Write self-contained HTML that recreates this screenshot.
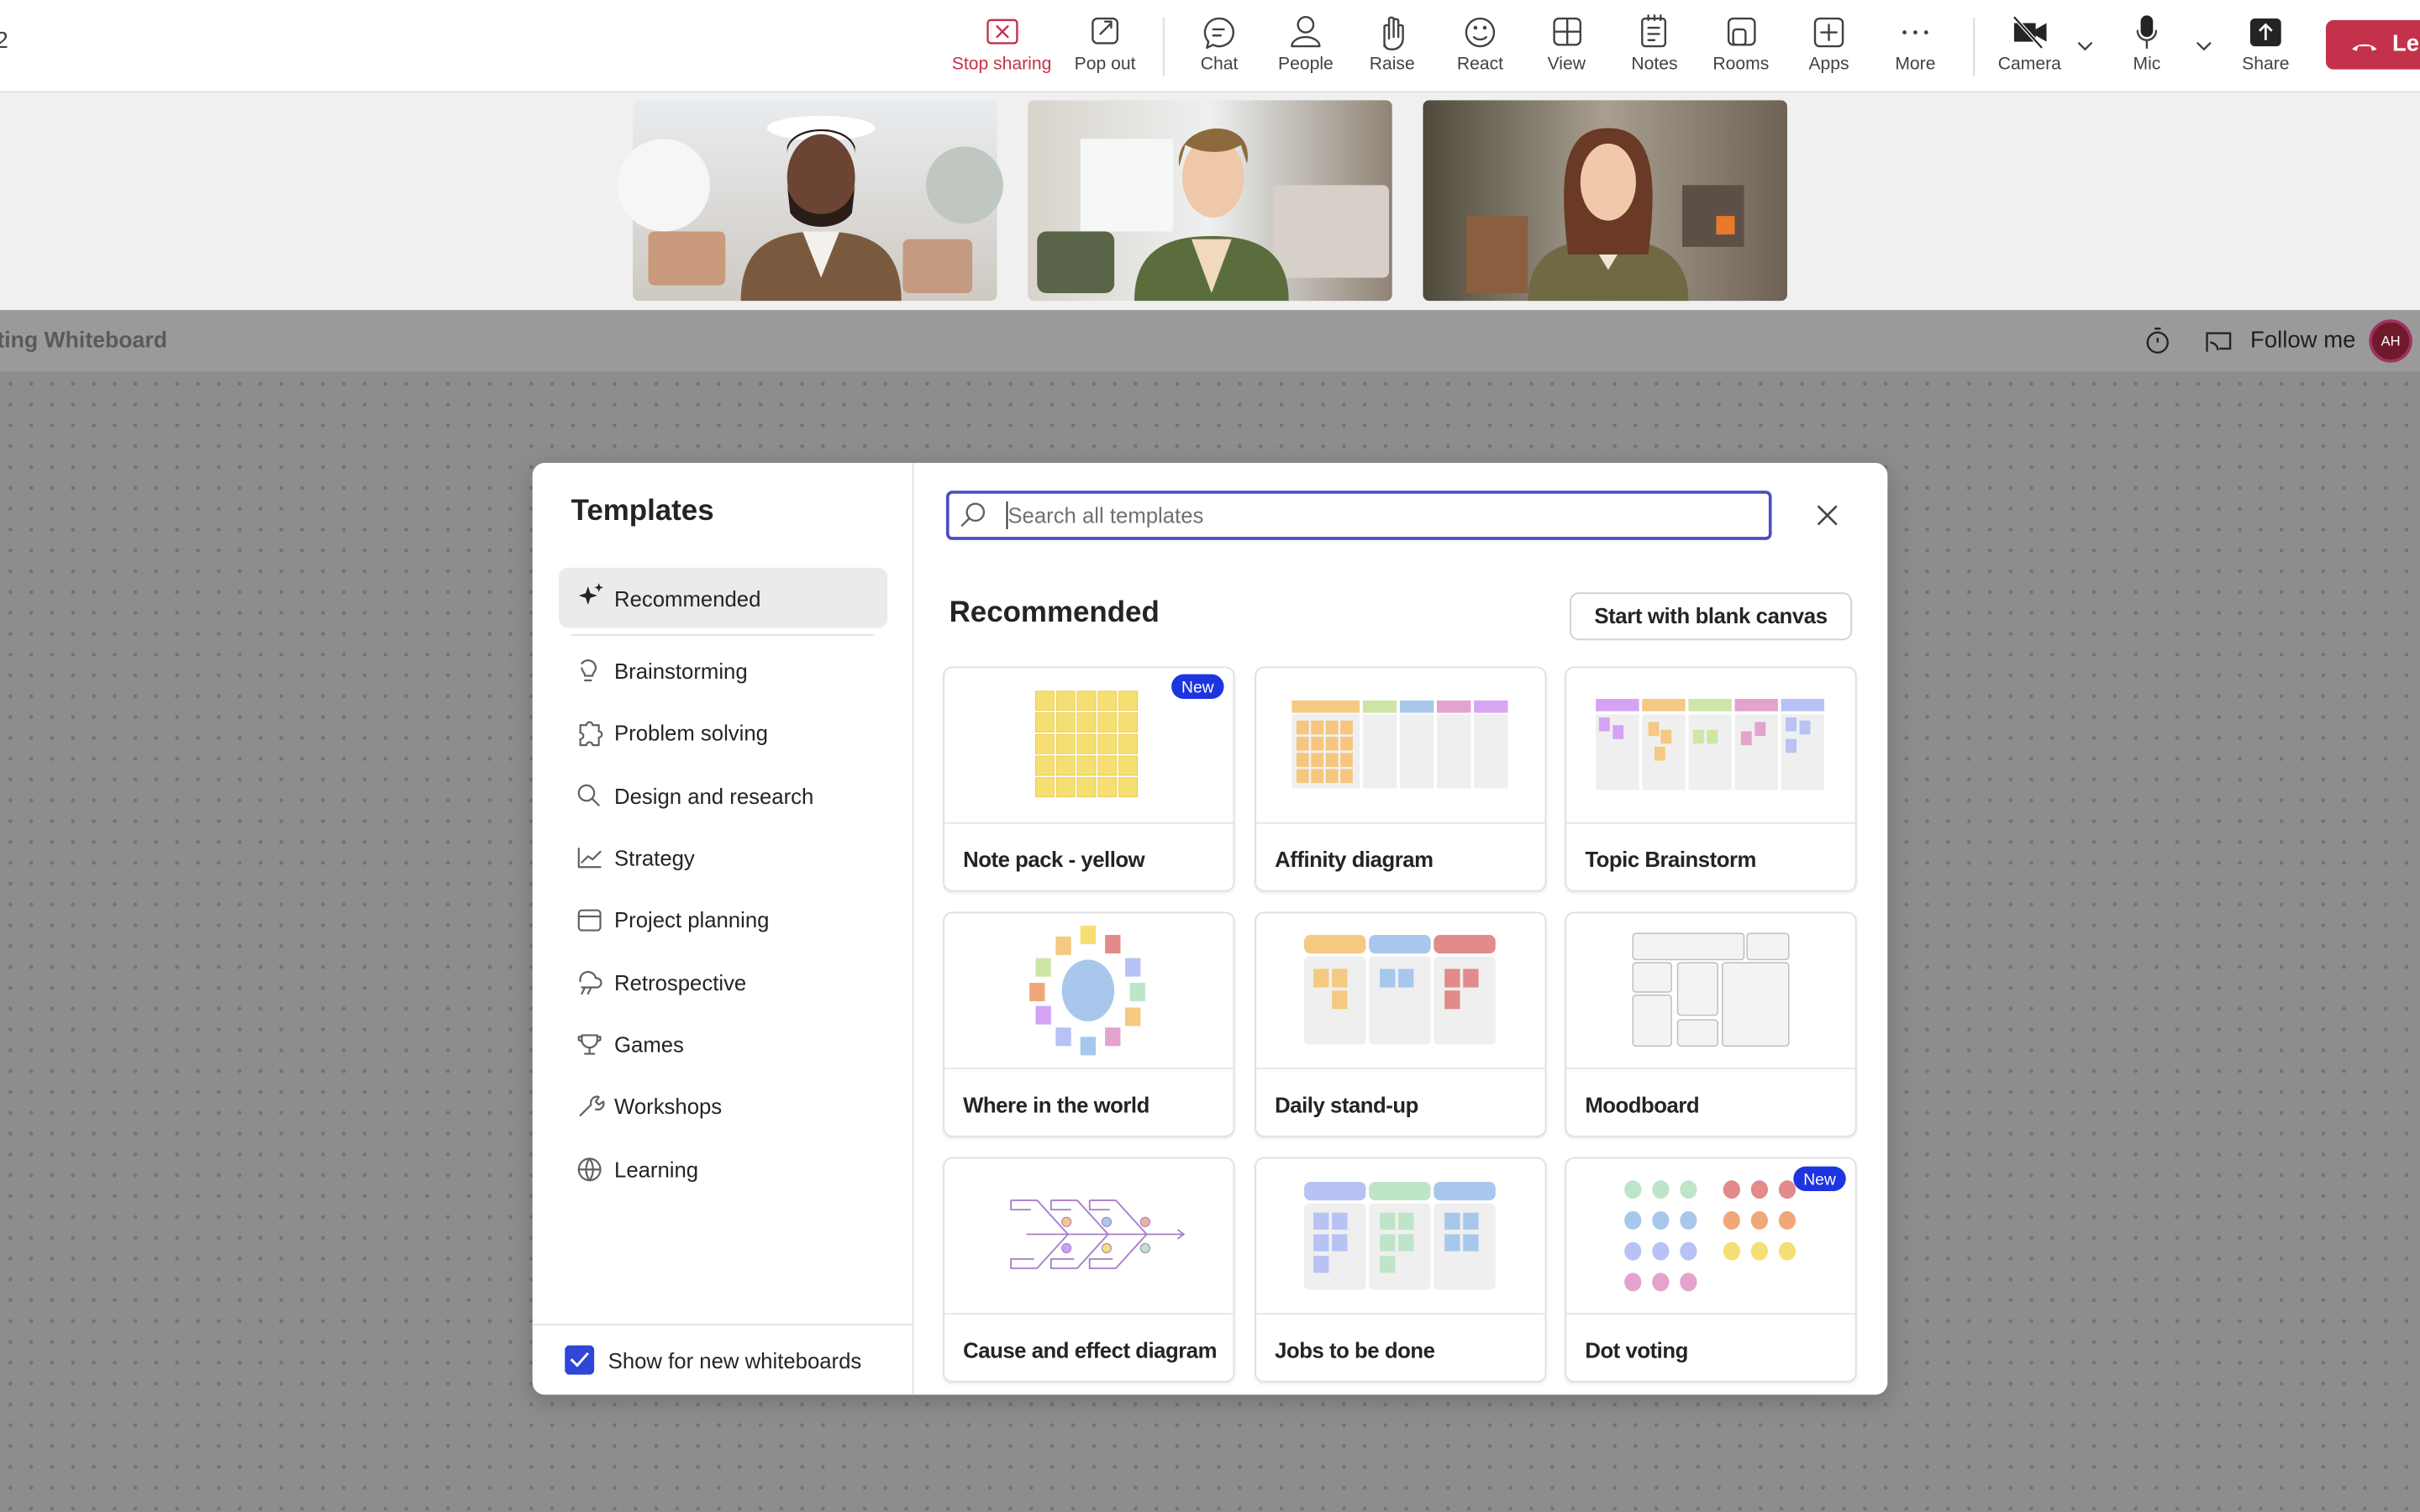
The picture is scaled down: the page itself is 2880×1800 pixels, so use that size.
<!DOCTYPE html>
<html><head><meta charset="utf-8">
<style>
*{margin:0;padding:0;box-sizing:border-box}
html,body{width:2880px;height:1800px;overflow:hidden;background:#8c8c8c}
#s{position:absolute;left:0;top:0;width:1568px;height:980px;transform:scale(1.836735);transform-origin:0 0;font-family:"Liberation Sans",sans-serif;color:#242424}
.abs{position:absolute}
.top{left:0;top:0;width:1568px;height:60px;background:#fff;border-bottom:1px solid #e0e0e0}
.lbl{position:absolute;top:36px;font-size:11.5px;color:#424242;transform:translateX(-50%);white-space:nowrap}
.strip{left:0;top:60px;width:1568px;height:141px;background:#f0f0f0}
.hdr{left:0;top:201px;width:1568px;height:41px;background:#9a9a9a;border-bottom:1px solid #8a8a8a}
.canvas{left:0;top:242px;width:1568px;height:738px;background-color:#8d8d8d;background-image:radial-gradient(#737373 1.1px,transparent 1.4px);background-size:13.5px 13.5px}
.modal{left:345px;top:300px;width:878px;height:604px;background:#fff;border-radius:8px;box-shadow:0 4px 16px rgba(0,0,0,.2);overflow:hidden}
.side{left:0;top:0;width:247px;height:604px;border-right:1px solid #e1e1e1}
.item{position:absolute;left:53px;font-size:14px;color:#242424;white-space:nowrap}
.card{position:absolute;width:189px;height:146px;border:1px solid #e0e0e0;border-radius:6px;background:#fff;box-shadow:0 1px 2px rgba(0,0,0,.08)}
.card .line{position:absolute;left:0;right:0;top:100px;border-top:1px solid #e6e6e6}
.card .t{position:absolute;left:12px;top:116px;font-size:14px;letter-spacing:-0.25px;font-weight:bold;color:#242424;white-space:nowrap}
</style></head><body><div id="s">
<div class="abs top"></div>
<div class="abs" style="left:-3px;top:18px;font-size:15px;color:#424242">2</div>
<div class="lbl" style="left:649px;color:#c4314b">Stop sharing</div>
<div class="lbl" style="left:716px">Pop out</div>
<div class="lbl" style="left:790px">Chat</div>
<div class="lbl" style="left:846px">People</div>
<div class="lbl" style="left:902px">Raise</div>
<div class="lbl" style="left:959px">React</div>
<div class="lbl" style="left:1015px">View</div>
<div class="lbl" style="left:1072px">Notes</div>
<div class="lbl" style="left:1128px">Rooms</div>
<div class="lbl" style="left:1185px">Apps</div>
<div class="lbl" style="left:1241px">More</div>
<div class="lbl" style="left:1315px">Camera</div>
<div class="lbl" style="left:1391px">Mic</div>
<div class="lbl" style="left:1468px">Share</div>
<div class="abs" style="left:1507px;top:13px;width:80px;height:32px;background:#c4314b;border-radius:5px;color:#fff;font-weight:bold;font-size:15px;padding:7px 0 0 43px">Lea</div>

<div class="abs strip"></div>
<div class="abs hdr"></div>
<div class="abs" style="left:-2px;top:213px;font-size:14.5px;font-weight:bold;color:#5a5a5a">ting Whiteboard</div>
<div class="abs" style="left:1458px;top:212px;font-size:15px;color:#1f1f1f">Follow me</div>
<div class="abs" style="left:1535px;top:207px;width:28px;height:28px;border-radius:50%;border:2px solid #a3305e;background:#6e1a2a;color:#fff;font-size:9px;text-align:center;line-height:24px">AH</div>
<div class="abs canvas"></div>

<div class="abs modal">
 <div class="abs side">
  <div class="abs" style="left:25px;top:21px;font-size:19px;font-weight:bold">Templates</div>
  <div class="abs" style="left:17px;top:68px;width:213px;height:39px;background:#ebebeb;border-radius:6px"></div>
  <div class="abs" style="left:25px;top:111px;width:196px;border-top:1px solid #e0e0e0"></div>
  <div class="item" style="top:80px">Recommended</div>
  <div class="item" style="top:127px">Brainstorming</div>
  <div class="item" style="top:167px">Problem solving</div>
  <div class="item" style="top:208px">Design and research</div>
  <div class="item" style="top:248px">Strategy</div>
  <div class="item" style="top:288px">Project planning</div>
  <div class="item" style="top:329px">Retrospective</div>
  <div class="item" style="top:369px">Games</div>
  <div class="item" style="top:409px">Workshops</div>
  <div class="item" style="top:450px">Learning</div>
  <div class="abs" style="left:0;top:558px;width:247px;border-top:1px solid #e0e0e0"></div>
  <div class="abs" style="left:21px;top:572px;width:19px;height:19px;background:#2f46d6;border-radius:3px"></div>
  <div class="abs" style="left:49px;top:574px;font-size:14px;white-space:nowrap">Show for new whiteboards</div>
 </div>
 <div class="abs" style="left:268px;top:18px;width:535px;height:32px;border:2px solid #4a4fc2;border-radius:4px"></div>
 <div class="abs" style="left:308px;top:26px;font-size:14px;color:#707070">Search all templates</div>
 <div class="abs" style="left:307px;top:25px;width:1px;height:18px;background:#242424"></div>
 <div class="abs" style="left:270px;top:87px;font-size:19px;font-weight:bold">Recommended</div>
 <div class="abs" style="left:672px;top:84px;width:183px;height:31px;border:1px solid #d1d1d1;border-radius:6px;font-size:14px;letter-spacing:-0.2px;font-weight:bold;text-align:center;line-height:29px;white-space:nowrap">Start with blank canvas</div>
</div>

<div class="card" style="left:611px;top:432px"><div class="line"></div><div class="t">Note pack - yellow</div></div>
<div class="card" style="left:813px;top:432px"><div class="line"></div><div class="t">Affinity diagram</div></div>
<div class="card" style="left:1014px;top:432px"><div class="line"></div><div class="t">Topic Brainstorm</div></div>
<div class="card" style="left:611px;top:591px"><div class="line"></div><div class="t">Where in the world</div></div>
<div class="card" style="left:813px;top:591px"><div class="line"></div><div class="t">Daily stand-up</div></div>
<div class="card" style="left:1014px;top:591px"><div class="line"></div><div class="t">Moodboard</div></div>
<div class="card" style="left:611px;top:750px"><div class="line"></div><div class="t">Cause and effect diagram</div></div>
<div class="card" style="left:813px;top:750px"><div class="line"></div><div class="t">Jobs to be done</div></div>
<div class="card" style="left:1014px;top:750px"><div class="line"></div><div class="t">Dot voting</div></div>

<svg class="abs" style="left:0;top:0" width="1568" height="980" viewBox="0 0 1568 980">
<defs>
<linearGradient id="r1" x1="0" y1="0" x2="0" y2="1"><stop offset="0" stop-color="#e9ecef"/><stop offset="1" stop-color="#cfc9c2"/></linearGradient>
<linearGradient id="r2" x1="0" y1="0" x2="1" y2="0"><stop offset="0" stop-color="#d8d3cb"/><stop offset=".5" stop-color="#eef0f0"/><stop offset="1" stop-color="#8f8375"/></linearGradient>
<linearGradient id="r3" x1="0" y1="0" x2="1" y2="0"><stop offset="0" stop-color="#4e4a3c"/><stop offset=".5" stop-color="#a89f90"/><stop offset="1" stop-color="#6e6254"/></linearGradient>
</defs>
<g fill="none" stroke="#424242" stroke-width="1.3" stroke-linecap="round" stroke-linejoin="round">
<rect x="640" y="13" width="19" height="15" rx="2" stroke="#c4314b"/><path d="M646 17l7 7M653 17l-7 7" stroke="#c4314b"/>
<rect x="708" y="12" width="16" height="16" rx="3"/><path d="M713 22l7-7M716 14h4v4"/>
<path d="M790 12a9 9 0 1 1-4 17l-4 2 1-4a9 9 0 0 1 7-15zM786 19h7M786 23h5"/>
<circle cx="846" cy="16" r="5"/><path d="M837 30a9 6 0 0 1 18 0z"/>
<path d="M897 30v-13a2 2 0 0 1 3 0v8M900 25v-13a2 2 0 0 1 3 0v12M903 24v-11a2 2 0 0 1 3 0v11M906 24v-7a2 2 0 0 1 3 0v8c0 4-3 7-7 7s-5-2-5-4"/>
<circle cx="959" cy="21" r="9"/><path d="M955 24a5 4 0 0 0 8 0"/><circle cx="956" cy="18" r=".6"/><circle cx="962" cy="18" r=".6"/>
<rect x="1007" y="12" width="17" height="17" rx="3"/><path d="M1015.5 12v17M1007 20.5h17"/>
<rect x="1064" y="12" width="15" height="18" rx="2"/><path d="M1068 18h7M1068 22h7M1068 26h4M1068 10v3M1072 10v3M1076 10v3"/>
<rect x="1120" y="12" width="17" height="17" rx="3"/><rect x="1123" y="19" width="8" height="10" rx="2"/>
<rect x="1176" y="12" width="18" height="18" rx="3"/><path d="M1185 16v10M1180 21h10"/>
<path d="M754 12v37M1279 12v37" stroke="#e0e0e0"/>
<path d="M1347 28l4 4 4-4M1424 28l4 4 4-4"/>
<path d="M1391 11v12M1385 20a6 6 0 0 0 12 0M1391 26v5"/>
</g>
<g fill="#424242"><circle cx="1234" cy="21" r="1.3"/><circle cx="1241" cy="21" r="1.3"/><circle cx="1248" cy="21" r="1.3"/></g>
<path d="M1305 15h14v12h-14z M1319 19l7-4v12l-7-4z" fill="#242424"/><path d="M1305 11l18 20" stroke="#fff" stroke-width="2.5"/><path d="M1305 11l18 20" stroke="#242424" stroke-width="1.2"/>
<rect x="1387" y="10" width="8" height="14" rx="4" fill="#242424"/>
<rect x="1458" y="12" width="20" height="18" rx="3" fill="#242424"/><path d="M1468 26v-10M1464 20l4-4 4 4" stroke="#fff" stroke-width="1.5" fill="none"/>
<path d="M1524 32a9 6 0 0 1 16 0l-3 1-1-3h-8l-1 3z" fill="#fff"/>
<rect x="410" y="65" width="236" height="130" rx="4" fill="url(#r1)"/>
<circle cx="430" cy="120" r="30" fill="#f5f6f6"/><circle cx="625" cy="120" r="25" fill="#bfc7c0"/>
<rect x="420" y="150" width="50" height="35" rx="4" fill="#c99a7c"/><rect x="585" y="155" width="45" height="35" rx="4" fill="#c49a80"/>
<ellipse cx="532" cy="83" rx="35" ry="8" fill="#fff"/>
<path d="M480 195c0-35 20-45 52-45s52 10 52 45z" fill="#7a5a3f"/>
<path d="M520 150l12 30 12-30z" fill="#f4f1ec"/>
<ellipse cx="532" cy="115" rx="22" ry="28" fill="#6b4433"/><path d="M510 120c5 25 39 25 44 0l-2 18c-8 12-32 12-40 0z" fill="#2a1c16"/><path d="M510 100c0-20 44-20 44 0v-5c-5-15-39-15-44 0z" fill="#2a1c16"/>
<rect x="666" y="65" width="236" height="130" rx="4" fill="url(#r2)"/>
<rect x="700" y="90" width="60" height="60" fill="#f6f7f7"/>
<rect x="825" y="120" width="75" height="60" rx="4" fill="#d6d0c8"/><rect x="672" y="150" width="50" height="40" rx="6" fill="#5a6448"/>
<path d="M735 195c0-32 20-42 50-42s50 10 50 42z" fill="#5b6d3d"/>
<path d="M772 155l13 35 13-35z" fill="#f0d9bd"/>
<ellipse cx="786" cy="115" rx="20" ry="26" fill="#eec8a8"/><path d="M764 108c-4-30 50-35 44-2l-4-12c-10 6-24 6-36 0z" fill="#8c6a3e"/>
<rect x="922" y="65" width="236" height="130" rx="4" fill="url(#r3)"/>
<rect x="1090" y="120" width="40" height="40" fill="#5c5046"/><rect x="1112" y="140" width="12" height="12" fill="#e87a2a"/>
<rect x="950" y="140" width="40" height="50" fill="#8a5f3f"/>
<path d="M990 195c0-30 20-40 52-40s52 10 52 40z" fill="#6f6a44"/>
<path d="M1030 155l12 20 12-20z" fill="#efe6d2"/>
<path d="M1016 165c-6-50-4-82 26-82s32 32 26 82z" fill="#6a3a26"/>
<ellipse cx="1042" cy="118" rx="18" ry="25" fill="#f0c8aa"/>
<g fill="none" stroke="#242424" stroke-width="1.3"><circle cx="1398" cy="222" r="6.5"/><path d="M1398 222v-3M1396 213h4"/><path d="M1430 228v-12h15v10h-7M1432 222a5 5 0 0 1 5 5"/></g>
<g fill="none" stroke="#616161" stroke-width="1.2" stroke-linecap="round" stroke-linejoin="round">
<path d="M377 430a5 5 0 0 1 9 3c0 2-2 3-2 5h-5c0-2-2-3-2-5M379 441h4"/>
<path d="M376 470h4a2 2 0 0 1 4 0h4v4a2 2 0 0 1 0 4v5h-4a2 2 0 0 0-4 0h-4v-4a2 2 0 0 0 0-4z"/>
<circle cx="380" cy="514" r="5"/><path d="M384 518l4 4"/>
<path d="M375 550v12h14M377 559l4-4 3 2 5-5"/>
<rect x="375" y="590" width="14" height="13" rx="2"/><path d="M375 594h14"/>
<path d="M376 636a5 5 0 0 1 10-2 3 3 0 0 1 1 6h-10M379 640l-2 4M383 640l-2 4"/>
<path d="M377 671h10v3a5 5 0 0 1-10 0zM382 679v3M379 683h6M377 672h-2v2l2 1M387 672h2v2l-2 1"/>
<path d="M376 723l7-7M383 716a4 4 0 0 1 5-5l-2 3 2 2 3-2a4 4 0 0 1-5 5"/>
<circle cx="382" cy="758" r="7"/><path d="M375 758h14M382 751c-3 4-3 10 0 14M382 751c3 4 3 10 0 14"/>
</g>
<path d="M381 380l1.5 4.5 4.5 1.5-4.5 1.5-1.5 4.5-1.5-4.5-4.5-1.5 4.5-1.5z M388 378l.8 2 2 .8-2 .8-.8 2-.8-2-2-.8 2-.8z" fill="#242424"/>
<path d="M370 881l4 4 7-8" stroke="#fff" stroke-width="1.6" fill="none"/>
<g fill="none" stroke="#616161" stroke-width="1.3"><circle cx="632" cy="332" r="5.5"/><path d="M628 336l-5 5"/></g>
<path d="M1178 328l12 12M1190 328l-12 12" stroke="#424242" stroke-width="1.4"/>
<rect x="759" y="437" width="34" height="16" rx="8" fill="#1d35e0"/><text x="776" y="449" font-size="10.5" fill="#fff" text-anchor="middle" font-family="Liberation Sans">New</text>
<rect x="1162" y="756" width="34" height="16" rx="8" fill="#1d35e0"/><text x="1179" y="768" font-size="10.5" fill="#fff" text-anchor="middle" font-family="Liberation Sans">New</text>
<g><rect x="837" y="454" width="44" height="8" fill="#f5c982"/><rect x="883" y="454" width="22" height="8" fill="#cde6a6"/><rect x="907" y="454" width="22" height="8" fill="#a7c8ec"/><rect x="931" y="454" width="22" height="8" fill="#e3a3cc"/><rect x="955" y="454" width="22" height="8" fill="#d8a5f2"/>
<rect x="837" y="463" width="44" height="48" fill="#efefef"/><rect x="883" y="463" width="22" height="48" fill="#efefef"/><rect x="907" y="463" width="22" height="48" fill="#efefef"/><rect x="931" y="463" width="22" height="48" fill="#efefef"/><rect x="955" y="463" width="22" height="48" fill="#efefef"/></g>
<g><rect x="1034" y="453" width="28" height="8" fill="#d4a3f4"/><rect x="1064" y="453" width="28" height="8" fill="#f5c982"/><rect x="1094" y="453" width="28" height="8" fill="#cde6a6"/><rect x="1124" y="453" width="28" height="8" fill="#e3a3cc"/><rect x="1154" y="453" width="28" height="8" fill="#b8c2f5"/>
<rect x="1034" y="463" width="28" height="49" fill="#efefef"/><rect x="1064" y="463" width="28" height="49" fill="#efefef"/><rect x="1094" y="463" width="28" height="49" fill="#efefef"/><rect x="1124" y="463" width="28" height="49" fill="#efefef"/><rect x="1154" y="463" width="28" height="49" fill="#efefef"/>
<rect x="1036" y="465" width="7" height="9" fill="#d4a3f4"/><rect x="1045" y="470" width="7" height="9" fill="#d4a3f4"/>
<rect x="1068" y="468" width="7" height="9" fill="#f5c982"/><rect x="1076" y="473" width="7" height="9" fill="#f5c982"/><rect x="1072" y="484" width="7" height="9" fill="#f5c982"/>
<rect x="1097" y="473" width="7" height="9" fill="#cde6a6"/><rect x="1106" y="473" width="7" height="9" fill="#cde6a6"/>
<rect x="1128" y="474" width="7" height="9" fill="#e3a3cc"/><rect x="1137" y="468" width="7" height="9" fill="#e3a3cc"/>
<rect x="1157" y="465" width="7" height="9" fill="#b8c2f5"/><rect x="1166" y="467" width="7" height="9" fill="#b8c2f5"/><rect x="1157" y="479" width="7" height="9" fill="#b8c2f5"/></g>
<ellipse cx="705" cy="642" rx="17" ry="20" fill="#a7c8ec"/>
<rect x="700" y="600" width="10" height="12" fill="#f6df72"/><rect x="716" y="606" width="10" height="12" fill="#e38a8a"/><rect x="729" y="621" width="10" height="12" fill="#b8c2f5"/><rect x="732" y="637" width="10" height="12" fill="#bfe5c9"/><rect x="729" y="653" width="10" height="12" fill="#f5c982"/><rect x="716" y="666" width="10" height="12" fill="#e3a3cc"/><rect x="700" y="672" width="10" height="12" fill="#a7c8ec"/><rect x="684" y="666" width="10" height="12" fill="#b8c2f5"/><rect x="671" y="652" width="10" height="12" fill="#d4a3f4"/><rect x="667" y="637" width="10" height="12" fill="#f0a87a"/><rect x="671" y="621" width="10" height="12" fill="#cde6a6"/><rect x="684" y="607" width="10" height="12" fill="#f5c982"/>
<rect x="845" y="606" width="40" height="12" rx="4" fill="#f5c982"/><rect x="887" y="606" width="40" height="12" rx="4" fill="#a7c8ec"/><rect x="929" y="606" width="40" height="12" rx="4" fill="#e38a8a"/>
<rect x="845" y="620" width="40" height="57" rx="3" fill="#efefef"/><rect x="887" y="620" width="40" height="57" rx="3" fill="#efefef"/><rect x="929" y="620" width="40" height="57" rx="3" fill="#efefef"/>
<rect x="851" y="628" width="10" height="12" fill="#f5c982"/><rect x="863" y="628" width="10" height="12" fill="#f5c982"/><rect x="863" y="642" width="10" height="12" fill="#f5c982"/>
<rect x="894" y="628" width="10" height="12" fill="#a7c8ec"/><rect x="906" y="628" width="10" height="12" fill="#a7c8ec"/>
<rect x="936" y="628" width="10" height="12" fill="#e38a8a"/><rect x="948" y="628" width="10" height="12" fill="#e38a8a"/><rect x="936" y="642" width="10" height="12" fill="#e38a8a"/>
<g fill="#f3f3f3" stroke="#bdbdbd" stroke-width=".8"><rect x="1058" y="605" width="72" height="17" rx="2"/><rect x="1132" y="605" width="27" height="17" rx="2"/><rect x="1058" y="624" width="25" height="19" rx="2"/><rect x="1058" y="645" width="25" height="33" rx="2"/><rect x="1087" y="624" width="26" height="34" rx="2"/><rect x="1087" y="661" width="26" height="17" rx="2"/><rect x="1116" y="624" width="43" height="54" rx="2"/></g>
<g fill="none" stroke="#a77fc8" stroke-width="1"><path d="M665 800h102M763 797l4 3-4 3"/>
<path d="M655 778h17l20 22-20 22h-17v-6h15M655 778v6h13"/>
<path d="M681 778h17l20 22-20 22h-17v-6h15M681 778v6h13"/>
<path d="M706 778h17l20 22-20 22h-17v-6h15M706 778v6h13"/></g>
<circle cx="691" cy="792" r="3" fill="#f5c982" stroke="#a77fc8" stroke-width=".6"/><circle cx="717" cy="792" r="3" fill="#a7c8ec" stroke="#a77fc8" stroke-width=".6"/><circle cx="742" cy="792" r="3" fill="#f0b0a0" stroke="#a77fc8" stroke-width=".6"/>
<circle cx="691" cy="809" r="3" fill="#c9a3e8" stroke="#a77fc8" stroke-width=".6"/><circle cx="717" cy="809" r="3" fill="#f6df72" stroke="#a77fc8" stroke-width=".6"/><circle cx="742" cy="809" r="3" fill="#bfe5c9" stroke="#a77fc8" stroke-width=".6"/>
<rect x="845" y="766" width="40" height="12" rx="4" fill="#b8c2f5"/><rect x="887" y="766" width="40" height="12" rx="4" fill="#bfe5c9"/><rect x="929" y="766" width="40" height="12" rx="4" fill="#a7c8ec"/>
<rect x="845" y="780" width="40" height="56" rx="3" fill="#efefef"/><rect x="887" y="780" width="40" height="56" rx="3" fill="#efefef"/><rect x="929" y="780" width="40" height="56" rx="3" fill="#efefef"/>
<g fill="#b8c2f5"><rect x="851" y="786" width="10" height="11"/><rect x="863" y="786" width="10" height="11"/><rect x="851" y="800" width="10" height="11"/><rect x="863" y="800" width="10" height="11"/><rect x="851" y="814" width="10" height="11"/></g>
<g fill="#bfe5c9"><rect x="894" y="786" width="10" height="11"/><rect x="906" y="786" width="10" height="11"/><rect x="894" y="800" width="10" height="11"/><rect x="906" y="800" width="10" height="11"/><rect x="894" y="814" width="10" height="11"/></g>
<g fill="#a7c8ec"><rect x="936" y="786" width="10" height="11"/><rect x="948" y="786" width="10" height="11"/><rect x="936" y="800" width="10" height="11"/><rect x="948" y="800" width="10" height="11"/></g>
<g><g fill="#bfe5c9"><ellipse cx="1058" cy="771" rx="5.5" ry="6"/><ellipse cx="1076" cy="771" rx="5.5" ry="6"/><ellipse cx="1094" cy="771" rx="5.5" ry="6"/></g>
<g fill="#e38a8a"><ellipse cx="1122" cy="771" rx="5.5" ry="6"/><ellipse cx="1140" cy="771" rx="5.5" ry="6"/><ellipse cx="1158" cy="771" rx="5.5" ry="6"/></g>
<g fill="#a7c8ec"><ellipse cx="1058" cy="791" rx="5.5" ry="6"/><ellipse cx="1076" cy="791" rx="5.5" ry="6"/><ellipse cx="1094" cy="791" rx="5.5" ry="6"/></g>
<g fill="#f0a87a"><ellipse cx="1122" cy="791" rx="5.5" ry="6"/><ellipse cx="1140" cy="791" rx="5.5" ry="6"/><ellipse cx="1158" cy="791" rx="5.5" ry="6"/></g>
<g fill="#b8c2f5"><ellipse cx="1058" cy="811" rx="5.5" ry="6"/><ellipse cx="1076" cy="811" rx="5.5" ry="6"/><ellipse cx="1094" cy="811" rx="5.5" ry="6"/></g>
<g fill="#f6df72"><ellipse cx="1122" cy="811" rx="5.5" ry="6"/><ellipse cx="1140" cy="811" rx="5.5" ry="6"/><ellipse cx="1158" cy="811" rx="5.5" ry="6"/></g>
<g fill="#e3a3cc"><ellipse cx="1058" cy="831" rx="5.5" ry="6"/><ellipse cx="1076" cy="831" rx="5.5" ry="6"/><ellipse cx="1094" cy="831" rx="5.5" ry="6"/></g></g>
<g fill="#f6df72" stroke="#e8ca50" stroke-width=".5">
<rect x="671" y="448" width="12" height="12.5"/><rect x="684.5" y="448" width="12" height="12.5"/><rect x="698" y="448" width="12" height="12.5"/><rect x="711.5" y="448" width="12" height="12.5"/><rect x="725" y="448" width="12" height="12.5"/>
<rect x="671" y="462" width="12" height="12.5"/><rect x="684.5" y="462" width="12" height="12.5"/><rect x="698" y="462" width="12" height="12.5"/><rect x="711.5" y="462" width="12" height="12.5"/><rect x="725" y="462" width="12" height="12.5"/>
<rect x="671" y="476" width="12" height="12.5"/><rect x="684.5" y="476" width="12" height="12.5"/><rect x="698" y="476" width="12" height="12.5"/><rect x="711.5" y="476" width="12" height="12.5"/><rect x="725" y="476" width="12" height="12.5"/>
<rect x="671" y="490" width="12" height="12.5"/><rect x="684.5" y="490" width="12" height="12.5"/><rect x="698" y="490" width="12" height="12.5"/><rect x="711.5" y="490" width="12" height="12.5"/><rect x="725" y="490" width="12" height="12.5"/>
<rect x="671" y="504" width="12" height="12.5"/><rect x="684.5" y="504" width="12" height="12.5"/><rect x="698" y="504" width="12" height="12.5"/><rect x="711.5" y="504" width="12" height="12.5"/><rect x="725" y="504" width="12" height="12.5"/>
</g>
<g fill="#f6c67e">
<rect x="840" y="467" width="8" height="9"/><rect x="849.5" y="467" width="8" height="9"/><rect x="859" y="467" width="8" height="9"/><rect x="868.5" y="467" width="8" height="9"/>
<rect x="840" y="477.5" width="8" height="9"/><rect x="849.5" y="477.5" width="8" height="9"/><rect x="859" y="477.5" width="8" height="9"/><rect x="868.5" y="477.5" width="8" height="9"/>
<rect x="840" y="488" width="8" height="9"/><rect x="849.5" y="488" width="8" height="9"/><rect x="859" y="488" width="8" height="9"/><rect x="868.5" y="488" width="8" height="9"/>
<rect x="840" y="498.5" width="8" height="9"/><rect x="849.5" y="498.5" width="8" height="9"/><rect x="859" y="498.5" width="8" height="9"/><rect x="868.5" y="498.5" width="8" height="9"/>
</g>
</svg>
</div></body></html>
